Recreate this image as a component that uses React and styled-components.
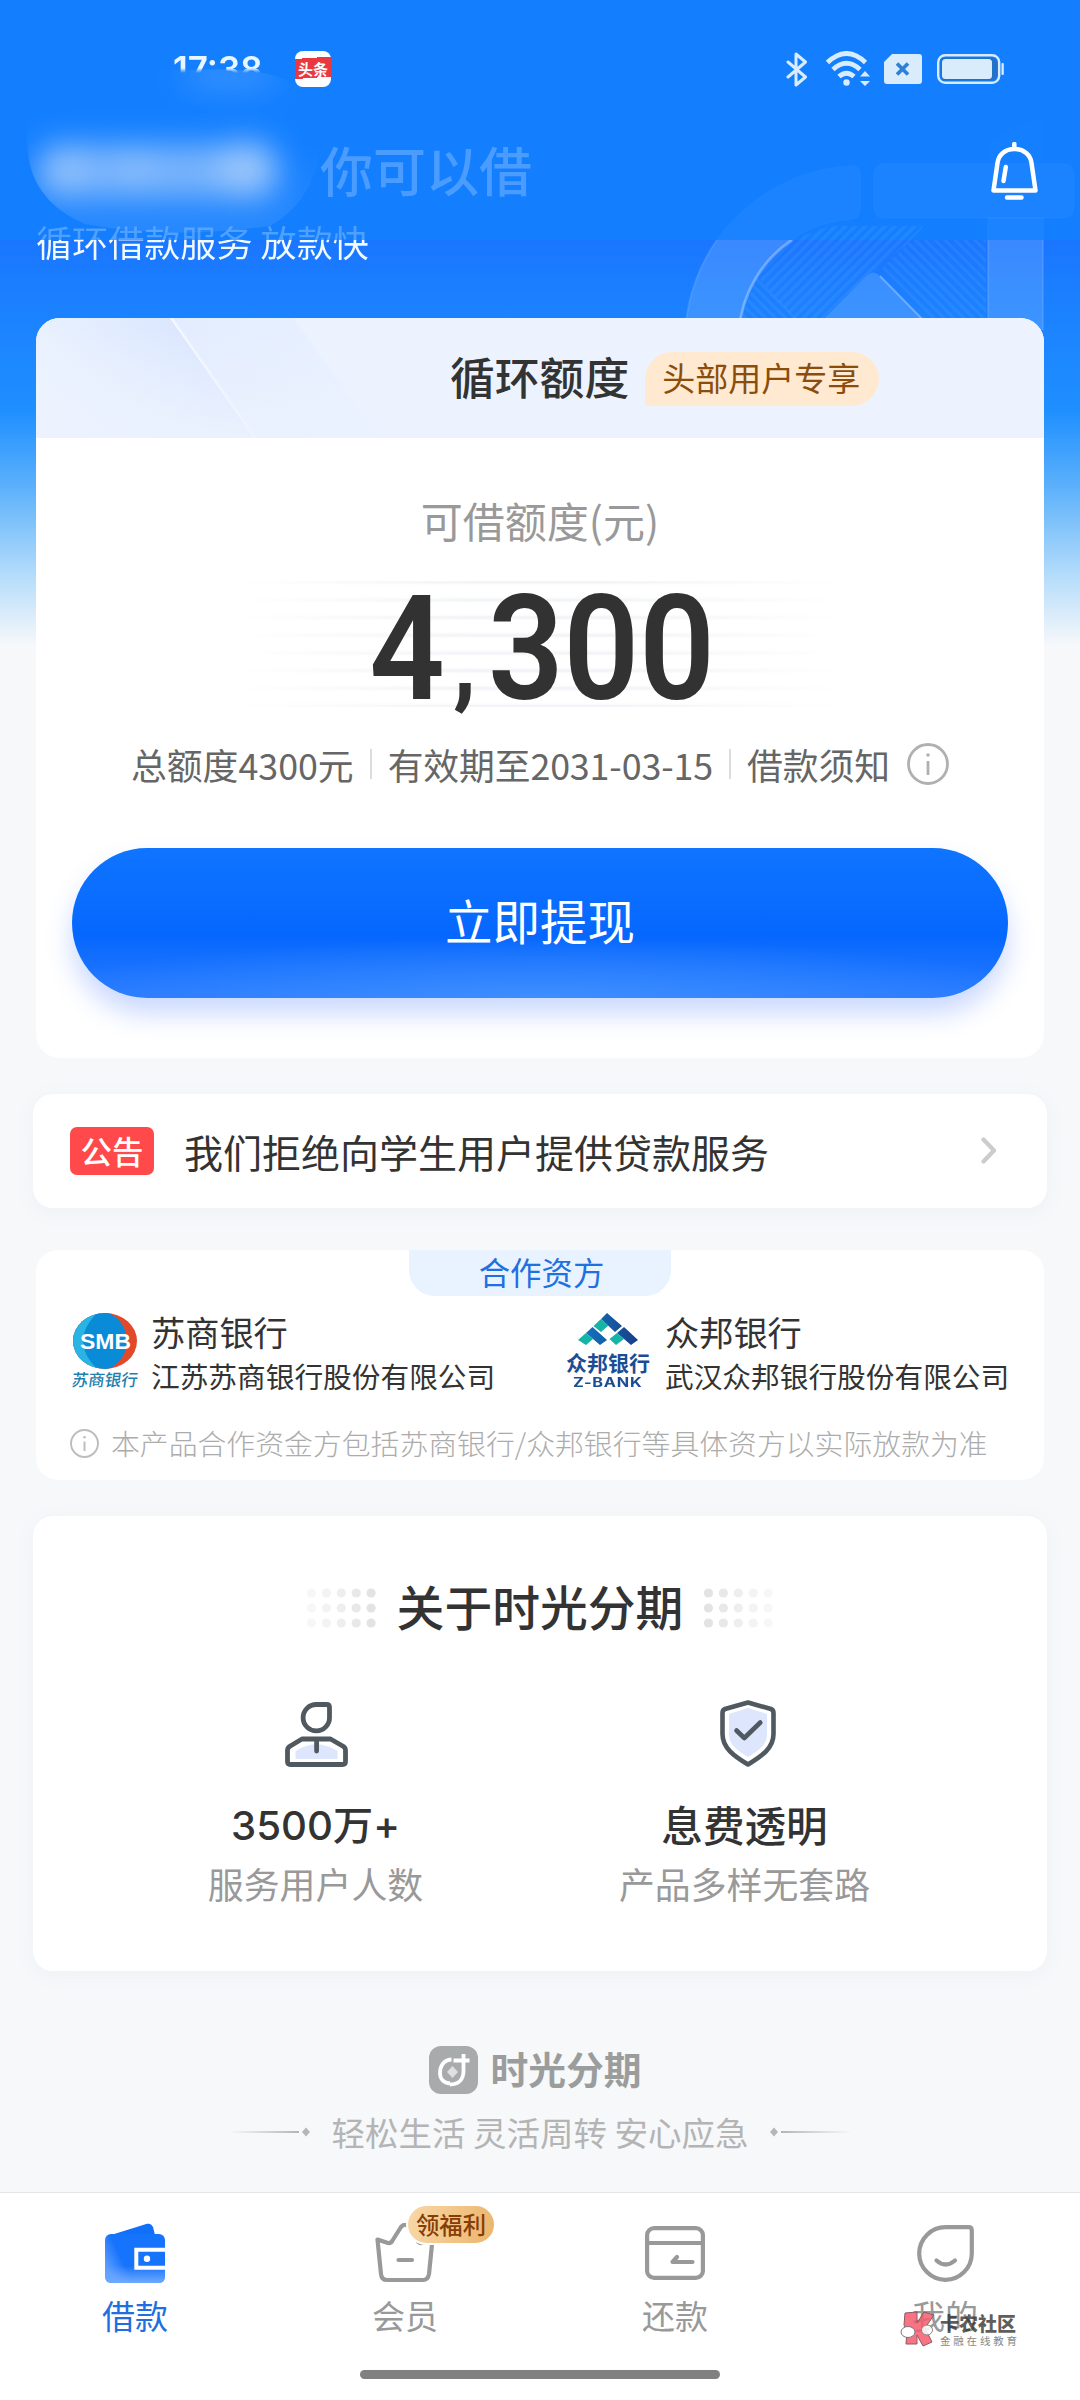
import React from "react";
import styled, { createGlobalStyle } from "styled-components";

const GlobalStyle = createGlobalStyle`
  *, *::before, *::after { box-sizing: border-box; }
  body {
    margin: 0;
    background: #f6f8fa;
    font-family: "Noto Sans CJK SC", "Noto Sans", sans-serif;
    color: #333;
  }
  svg { display: block; flex: none; }
`;

const Page = styled.div`
  position: relative;
  width: 1080px;
  height: 2400px;
  overflow: hidden;
  display: flex;
  flex-direction: column;
  background:
    linear-gradient(180deg, #137fff 0 240px, #1a76ff 240px, #1b80ff 300px, #1e8fff 410px, #5fb2fb 490px, #b4dcfa 575px, #f6f8fa 645px) no-repeat,
    #f6f8fa;
`;

const HeroArt = styled.svg`
  position: absolute;
  left: 0;
  top: 0;
`;

const StatusBar = styled.header`
  position: relative;
  height: 108px;
  padding: 48px 76px 0 173px;
  display: flex;
  align-items: flex-start;
  justify-content: space-between;
`;

const StatusGroup = styled.div`
  display: flex;
  align-items: center;
  gap: ${(p) => p.$gap}px;
  height: 42px;
`;

const Clock = styled.span`
  width: 92px;
  font: 600 35px/42px Inter, sans-serif;
  letter-spacing: 0;
  color: #eaf6ff;
  white-space: nowrap;
  mask-image: linear-gradient(180deg, #000 20px, transparent 25px);
`;

const NewsIcon = styled.span`
  width: 36px;
  height: 36px;
  border-radius: 8px;
  background: linear-gradient(176deg, #fff 8px, #e9383f 8px 28px, #fff 28px);
  color: #fff;
  font-size: 15px;
  font-weight: 700;
  line-height: 36px;
  text-align: center;
`;

const StatusIcons = styled.div`
  display: flex;
  align-items: center;
  height: 42px;
  color: #d9ecfc;
`;

const Greeting = styled.div`
  position: relative;
  height: 108px;
  padding: 0 42px 0 320px;
  display: flex;
  justify-content: space-between;
  align-items: flex-start;
`;

const GreetingText = styled.h1`
  margin: 21px 0 0;
  font-size: 53px;
  line-height: 80px;
  font-weight: 500;
  color: #4a9dff;
`;

const BellButton = styled.button`
  margin: 34px 0 0;
  padding: 0;
  border: 0;
  background: none;
  color: #fff;
`;

const Tagline = styled.p`
  position: relative;
  margin: -2px 0 50px 36px;
  width: 400px;
  font-size: 36.1px;
  line-height: 54px;
  color: transparent;
  background: linear-gradient(180deg, rgba(255, 255, 255, 0.26) 26px, #f2faff 26px);
  background-clip: text;
`;

const NameMask = styled.svg`
  position: absolute;
  left: 0;
  top: 50px;
`;

const Card = styled.section`
  position: relative;
  background: #fff;
  flex: none;
  margin: 0 ${(p) => p.$side}px ${(p) => p.$gap}px;
  height: ${(p) => p.$h}px;
  border-radius: ${(p) => p.$radius || 22}px;
  box-shadow: ${(p) => (p.$lift ? "0 4px 20px rgba(120,130,150,.06)" : "none")};
  display: flex;
  flex-direction: column;
  overflow: ${(p) => (p.$lift ? "visible" : "hidden")};
`;

const QuotaHead = styled.div`
  height: 120px;
  padding: 0 165px 4px 414px;
  display: flex;
  align-items: center;
  gap: 16px;
  background:
    linear-gradient(180deg, rgba(236, 243, 255, 0) 10%, rgba(236, 243, 255, 0.85)),
    linear-gradient(55deg, rgba(236, 243, 255, 0) 40px, rgba(218, 230, 254, 0.9) 178px, #f8faff 179px, rgba(224, 234, 254, 0.7) 182px, rgba(230, 239, 255, 0.9) 278px, rgba(236, 243, 255, 0) 282px),
    #ecf3ff;
`;

const QuotaTitle = styled.h2`
  margin: 0;
  font-size: 44.8px;
  line-height: 64px;
  font-weight: 500;
  white-space: nowrap;
`;

const VipTag = styled.span`
  height: 54px;
  margin-top: 5px;
  padding: 0 19px 0 17px;
  border-radius: 27px 27px 27px 4px;
  background: #ffe9d0;
  color: #8a4d0c;
  font-size: 33px;
  line-height: 51px;
  white-space: nowrap;
`;

const QuotaLabel = styled.p`
  margin: 52px 0 0;
  text-align: center;
  font-size: 42px;
  line-height: 60px;
  color: #999;
`;

const AmountArea = styled.div`
  margin: 31px auto 0;
  width: 600px;
  height: 126px;
  display: flex;
  justify-content: center;
  background:
    linear-gradient(90deg, #fff, rgba(255, 255, 255, 0) 40% 60%, #fff),
    repeating-linear-gradient(180deg, #f3f4f7 0 2px, #fff 4px 15px, #f8f9fb 17.7px);
`;

const Amount = styled.span`
  margin-left: 3px;
  font: 600 147px/136px Roboto, sans-serif;
  color: #323232;
  transform: scaleX(0.9);
  white-space: nowrap;
  display: flex;
`;

const AmountPart = styled.span``;

const AmountComma = styled.span`
  margin: 0 13px 0 9px;
  font-size: 100px;
  font-weight: 800;
  line-height: 160px;
  width: 26px;
`;

const Details = styled.div`
  margin-top: 30px;
  height: 54px;
  padding-left: 95px;
  display: flex;
  align-items: center;
  gap: 16.5px;
  color: #666;
  font-size: 35.8px;
  line-height: 54px;
  white-space: nowrap;
`;

const DateText = styled.span`
  letter-spacing: -0.12px;
`;

const Divider = styled.i`
  width: 2px;
  height: 30px;
  margin-right: -1px;
  background: #dcdcdc;
`;

const WithdrawButton = styled.button`
  margin: 57px 36px 0;
  height: 150px;
  flex: none;
  border: 0;
  border-radius: 75px;
  color: #fff;
  font: 400 47.5px/144px "Noto Sans CJK SC", sans-serif;
  padding: 0 0 6px;
  background:
    radial-gradient(ellipse 520px 60px at 50% 100%, rgba(70, 150, 255, 0.7), rgba(70, 150, 255, 0)),
    linear-gradient(180deg, #0f74ff 0, #086bff 45%, #0567fd 58%, #2a7bff 100%);
  box-shadow: 0 16px 26px rgba(70, 120, 255, 0.28);
`;

const NoticeRow = styled.div`
  height: 100%;
  padding: 0 50px 0 37px;
  display: flex;
  align-items: center;
`;

const NoticeTag = styled.span`
  width: 84px;
  height: 48px;
  border-radius: 7px;
  background: #ff494a;
  color: #fff;
  font-size: 31.5px;
  font-weight: 500;
  line-height: 47px;
  text-align: center;
`;

const NoticeText = styled.span`
  flex: 1;
  margin-left: 30px;
  font-size: 39px;
  line-height: 56px;
`;

const PartnerTab = styled.h3`
  margin: 0 auto;
  width: 262px;
  height: 46px;
  border-radius: 0 0 26px 26px;
  background: #e9f3ff;
  color: #1f70e0;
  font-size: 31.4px;
  font-weight: 400;
  line-height: 44px;
  padding-left: 3px;
  text-align: center;
`;

const Banks = styled.div`
  display: flex;
  height: 104px;
  padding: 11px 0 0 34px;
`;

const Bank = styled.div`
  display: flex;
  width: ${(p) => p.$w}px;
  flex: none;
`;

const BankLogo = styled.div`
  width: ${(p) => p.$w}px;
  margin-right: ${(p) => p.$gap}px;
  display: flex;
  flex-direction: column;
  align-items: center;
  padding-top: 6px;
`;

const ScriptName = styled.span`
  margin-top: 1px;
  font-size: 16.5px;
  line-height: 19px;
  font-weight: 500;
  color: #1f7fae;
  transform: skewX(-8deg);
  white-space: nowrap;
`;

const BankBold = styled.span`
  margin-top: 5px;
  font-size: 21px;
  line-height: 25px;
  font-weight: 700;
  color: #1b4d93;
  white-space: nowrap;
`;

const BankLatin = styled.span`
  font: 700 13px/14px Inter, sans-serif;
  color: #1b4d93;
  letter-spacing: 0.6px;
  transform: scaleX(1.25);
  white-space: nowrap;
`;

const BankText = styled.div`
  display: flex;
  flex-direction: column;
  white-space: nowrap;
`;

const BankName = styled.span`
  font-size: 34.2px;
  line-height: 48px;
`;

const BankFull = styled.span`
  font-size: 28.7px;
  line-height: 42px;
`;

const Note = styled.p`
  margin: 20px 0 0 34px;
  display: flex;
  align-items: center;
  gap: 12px;
  font-size: 28.85px;
  line-height: 46px;
  font-weight: 300;
  color: #acacac;
  white-space: nowrap;
`;

const AboutTitle = styled.div`
  margin-top: 57px;
  height: 70px;
  display: flex;
  justify-content: center;
  align-items: center;
  gap: 21px;
`;

const AboutHeading = styled.h2`
  margin: -4px 0 0;
  font-size: 47.8px;
  line-height: 70px;
  font-weight: 500;
`;

const Features = styled.div`
  display: flex;
  margin: 56px 88px 0 68px;
  justify-content: space-between;
`;

const Feature = styled.div`
  width: 430px;
  display: flex;
  flex-direction: column;
  align-items: center;
`;

const FeatureIcon = styled.div`
  height: 68px;
  padding-left: ${(p) => (p.$low ? 1 : 6)}px;
  display: flex;
  align-items: ${(p) => (p.$low ? "flex-end" : "center")};
`;

const FeatureTitle = styled.strong`
  margin-top: 27px;
  height: 60px;
  font-size: ${(p) => (p.$latin ? 40.2 : 41.6)}px;
  line-height: ${(p) => (p.$latin ? 63 : 60)}px;
  font-weight: 500;
  font-family: ${(p) => (p.$latin ? 'Inter, "Noto Sans CJK SC"' : '"Noto Sans CJK SC"')}, sans-serif;
`;

const FeatureSub = styled.span`
  margin-top: 2px;
  font-size: 35.9px;
  line-height: 54px;
  color: #999;
`;

const Footer = styled.footer`
  height: 147px;
  flex: none;
  display: flex;
  flex-direction: column;
  align-items: center;
`;

const Brand = styled.div`
  display: flex;
  align-items: center;
  gap: 12px;
  height: 50px;
  margin-right: 9px;
`;

const BrandName = styled.span`
  margin-top: -5px;
  font-size: 37.8px;
  font-weight: 700;
  line-height: 50px;
  color: #9b9d9d;
`;

const Slogan = styled.div`
  display: flex;
  align-items: center;
  gap: 21px;
  margin-top: 12px;
  height: 50px;
  font-size: 33.5px;
  line-height: 50px;
  color: #b4b4b4;
  white-space: nowrap;
`;

const TabBar = styled.nav`
  position: relative;
  flex: none;
  height: 208px;
  border-top: 1px solid #e3e5e9;
  background: #fff;
  display: flex;
`;

const Tab = styled.a`
  position: relative;
  width: 270px;
  display: flex;
  flex-direction: column;
  align-items: center;
  color: ${(p) => (p.$active ? "#1f6fe0" : "#999")};
`;

const TabIcon = styled.div`
  margin-top: 29px;
  height: 62px;
  display: flex;
  align-items: center;
`;

const TabLabel = styled.span`
  margin-top: 7px;
  font-size: 33px;
  line-height: 48px;
`;

const TabBadge = styled.span`
  position: absolute;
  left: 136px;
  top: 11px;
  width: 90px;
  height: 41px;
  border: 2px solid #fff;
  border-radius: 21px;
  background: linear-gradient(100deg, #f8d8a8, #ecb56c);
  color: #863d06;
  font-size: 23.3px;
  font-weight: 500;
  line-height: 36px;
  text-align: center;
`;

const HomeIndicator = styled.div`
  position: absolute;
  left: 360px;
  bottom: 21px;
  width: 360px;
  height: 9px;
  border-radius: 5px;
  background: #808080;
`;

const Watermark = styled.div`
  position: absolute;
  left: 899px;
  top: 118px;
  display: flex;
  gap: 5px;
`;

const WatermarkText = styled.div`
  display: flex;
  flex-direction: column;
  white-space: nowrap;
`;

const WatermarkName = styled.span`
  font-size: 19px;
  font-weight: 900;
  line-height: 23px;
  color: rgba(50, 50, 50, 0.78);
`;

const WatermarkSub = styled.span`
  font-size: 10.5px;
  line-height: 14px;
  letter-spacing: 2.8px;
  color: #888;
`;

const Glyph = ({ id }) => (
  <g id={id}>
    <path d="M685 345 A175 175 0 0 1 852 166 Q860 166 860 174 V210 Q860 218 852 219 A121 121 0 0 0 739 345 Z" />
    <rect x="874" y="164" width="200" height="54" rx="10" />
    <rect x="988" y="218" width="55" height="130" />
  </g>
);

function Art() {
  return (
    <HeroArt width="1080" height="330" viewBox="0 0 1080 330" fill="none">
      <defs>
        <clipPath id="upper"><rect width="1080" height="240" /></clipPath>
        <clipPath id="lower"><rect y="240" width="1080" height="90" /></clipPath>
        <pattern id="rise" width="7" height="7" patternUnits="userSpaceOnUse" patternTransform="rotate(45)">
          <rect width="3.5" height="7" fill="#fff" fillOpacity=".06" />
        </pattern>
        <pattern id="fall" width="7" height="7" patternUnits="userSpaceOnUse" patternTransform="rotate(-45)">
          <rect width="3" height="7" fill="#fff" fillOpacity=".055" />
        </pattern>
      </defs>
      <g clipPath="url(#upper)" fill="#fff" fillOpacity=".035" stroke="#fff" strokeOpacity=".02" strokeWidth="2">
        <Glyph id="markUpper" />
        <path d="M990 145 A70 70 0 0 1 1043 120 V164 H990 Z" fillOpacity=".012" stroke="none" />
      </g>
      <g clipPath="url(#lower)" fill="#fff" fillOpacity=".14" stroke="#fff" strokeOpacity=".1" strokeWidth="2">
        <Glyph id="markLower" />
        <path d="M792 240 A121 121 0 0 0 739 330" fill="none" strokeOpacity=".25" strokeWidth="3" />
        <path d="M813 330 L866 276 Q873 269 880 276 L933 330 Z" stroke="none" />
        <path d="M880 276 L933 330" fill="none" strokeOpacity=".3" />
      </g>
      <path d="M792 240 L830 226 H924 L905 246 L866 276 L823 318 H794 L757 276 Z" fill="url(#rise)" />
      <path d="M880 270 L912 240 H986 V318 H925 Z" fill="url(#fall)" />
      <path d="M757 276 L796 318 H742 Z" fill="url(#fall)" />
    </HeroArt>
  );
}

function MaskedName() {
  return (
    <NameMask width="340" height="190" viewBox="0 50 340 190">
      <defs>
        <filter id="soft" x="-30%" y="-80%" width="160%" height="260%"><feGaussianBlur stdDeviation="15" /></filter>
        <linearGradient id="haze" x1="0" y1="0" x2="0" y2="1">
          <stop offset=".5" stopColor="#7fb4fa" stopOpacity="0" />
          <stop offset="1" stopColor="#7fb4fa" stopOpacity=".2" />
        </linearGradient>
        <clipPath id="smudge">
          <path d="M27 70 H190 Q260 66 290 82 Q330 110 318 160 Q308 205 270 226 Q170 240 85 224 Q40 205 30 165 Q26 150 27 110 Z" />
        </clipPath>
      </defs>
      <g clipPath="url(#smudge)">
        <rect y="50" width="340" height="190" fill="url(#haze)" />
        <g filter="url(#soft)">
          <rect x="38" y="144" width="240" height="54" rx="20" fill="#a8cdfb" fillOpacity=".66" />
          <circle cx="66" cy="170" r="22" fill="#b4d3fb" fillOpacity=".4" />
          <circle cx="135" cy="168" r="18" fill="#b4d3fb" fillOpacity=".3" />
          <circle cx="245" cy="168" r="28" fill="#b4d3fb" fillOpacity=".55" />
          <ellipse cx="230" cy="77" rx="50" ry="10" fill="#8cc0ff" fillOpacity=".4" />
        </g>
      </g>
    </NameMask>
  );
}

const InfoIcon = ({ size, color, w }) => (
  <svg width={size} height={size} viewBox="0 0 42 42" fill="none" stroke={color} strokeWidth={w}>
    <circle cx="21" cy="21" r="19.5" />
    <path d="M21 18 V32" />
    <circle cx="21" cy="12" r={w * 0.65} fill={color} stroke="none" />
  </svg>
);

function Dots({ flip }) {
  const shades = ["#f7f7f7", "#f3f3f3", "#eeeeee", "#e8e8e8", "#e3e3e3"];
  const row = flip ? [...shades].reverse() : shades;
  return (
    <svg width="69" height="40" viewBox="0 0 69 40">
      {[5, 20, 35].map((y) =>
        row.map((c, i) => <circle key={`${y}-${i}`} cx={4.5 + i * 14.9} cy={y} r="4.6" fill={c} />)
      )}
    </svg>
  );
}

const SloganLine = ({ flip, id }) => (
  <svg width="82" height="12" viewBox="0 0 82 12" style={{ transform: flip ? "scaleX(-1)" : "none" }}>
    <defs>
      <linearGradient id={id}><stop stopColor="#bbb" stopOpacity="0" /><stop offset="1" stopColor="#b4b4b4" /></linearGradient>
    </defs>
    <rect x="0" y="5" width="71" height="2" fill={`url(#${id})`} />
    <path d="M78 1.500 L82 6 L78 10.500 L74 6 Z" fill="#b6b6b6" />
  </svg>
);

export default function App() {
  return (
    <Page>
      <GlobalStyle />
      <Art />
      <StatusBar>
        <StatusGroup $gap={30}>
          <Clock>17:38</Clock>
          <NewsIcon>头条</NewsIcon>
        </StatusGroup>
        <StatusIcons>
          <svg width="22" height="35" viewBox="0 0 22 35" fill="none" stroke="currentColor" strokeWidth="3" strokeLinejoin="round" strokeLinecap="round">
            <path d="M2 10 L19.500 25 L10 33 V2 L19.500 10 L2 25" />
          </svg>
          <svg width="46" height="36" viewBox="0 0 46 36" fill="none" stroke="currentColor" strokeWidth="4.8" style={{ marginLeft: 18 }}>
            <path d="M1.500 11.500 Q20.500 -6.500 39.500 11.500" />
            <path d="M7 18.500 Q20.500 6 34 18.500" />
            <path d="M13 25.500 Q20.500 19 28 25.500" />
            <circle cx="20.500" cy="31.500" r="3.200" fill="currentColor" stroke="none" />
            <path d="M34 25.500 L39 20 L44 25.500 Z M34 30 L39 35 L44 30 Z" fill="currentColor" stroke="none" />
          </svg>
          <svg width="38" height="30" viewBox="0 0 38 30" style={{ marginLeft: 12 }}>
            <path d="M8 0 H35 Q38 0 38 3 V27 Q38 30 35 30 H3 Q0 30 0 27 V8 Z" fill="currentColor" />
            <path d="M13 9.500 L24 20.500 M24 9.500 L13 20.500" stroke="#2d7fd8" strokeWidth="3.600" />
          </svg>
          <svg width="67" height="30" viewBox="0 0 67 30" style={{ marginLeft: 15 }}>
            <rect x="1.200" y="1.200" width="61" height="27.600" rx="7" fill="none" stroke="currentColor" strokeWidth="2.400" />
            <rect x="3.500" y="3.500" width="56.500" height="23" rx="5" fill="#2372c9" />
            <rect x="5" y="5" width="50" height="20" rx="3.500" fill="currentColor" />
            <rect x="64.500" y="9" width="2.300" height="12" rx="1" fill="currentColor" />
          </svg>
        </StatusIcons>
      </StatusBar>
      <Greeting>
        <GreetingText>你可以借</GreetingText>
        <BellButton aria-label="消息">
          <svg width="47" height="58" viewBox="0 0 47 58" fill="none" stroke="currentColor" strokeWidth="4.500" strokeLinejoin="round" strokeLinecap="round">
            <path d="M23.300 2 V6 M23.300 7 C14 7 7.500 13 6.500 21 L2.500 48.500 H44.500 L40.500 21 C39.500 13 33 7 23.300 7 Z M16 55.500 H30.500 M14.800 25 L12.500 39" />
          </svg>
        </BellButton>
      </Greeting>
      <Tagline>循环借款服务 放款快</Tagline>
      <MaskedName />

      <Card $side={36} $gap={36} $h={739.5} $radius={24}>
        <QuotaHead>
          <QuotaTitle>循环额度</QuotaTitle>
          <VipTag>头部用户专享</VipTag>
        </QuotaHead>
        <QuotaLabel>可借额度(元)</QuotaLabel>
        <AmountArea>
          <Amount>
            <AmountPart>4</AmountPart>
            <AmountComma>,</AmountComma>
            <AmountPart>300</AmountPart>
          </Amount>
        </AmountArea>
        <Details>
          <span>总额度4300元</span>
          <Divider />
          <DateText>有效期至2031-03-15</DateText>
          <Divider />
          <span>借款须知</span>
          <InfoIcon size={42} color="#b0b0b0" w={2.8} />
        </Details>
        <WithdrawButton>立即提现</WithdrawButton>
      </Card>

      <Card $side={33} $gap={42.5} $h={114} $radius={20} $lift>
        <NoticeRow>
          <NoticeTag>公告</NoticeTag>
          <NoticeText>我们拒绝向学生用户提供贷款服务</NoticeText>
          <svg width="16" height="27" viewBox="0 0 16 27" fill="none" stroke="#ccc" strokeWidth="4.200" strokeLinecap="round" strokeLinejoin="round">
            <path d="M2.500 2.500 L13 13.500 L2.500 24.500" />
          </svg>
        </NoticeRow>
      </Card>

      <Card $side={36} $gap={36} $h={230}>
        <PartnerTab>合作资方</PartnerTab>
        <Banks>
          <Bank $w={494}>
            <BankLogo $w={70} $gap={11}>
              <svg width="64" height="56" viewBox="0 0 64 56">
                <defs><clipPath id="smb"><ellipse cx="32" cy="28" rx="32" ry="28" /></clipPath></defs>
                <g clipPath="url(#smb)">
                  <rect width="64" height="56" fill="#e2492b" />
                  <ellipse cx="22" cy="28" rx="32" ry="31" fill="#0a8bd8" />
                  <path d="M0 0 H24 Q-4 28 24 56 H0 Z" fill="#29b4e4" />
                </g>
                <text x="32.500" y="35.500" textAnchor="middle" fontFamily="Liberation Sans" fontWeight="700" fontSize="22" textLength="51" lengthAdjust="spacingAndGlyphs" fill="#fff">SMB</text>
              </svg>
              <ScriptName>苏商银行</ScriptName>
            </BankLogo>
            <BankText>
              <BankName>苏商银行</BankName>
              <BankFull>江苏苏商银行股份有限公司</BankFull>
            </BankText>
          </Bank>
          <Bank $w={460}>
            <BankLogo $w={88} $gap={13}>
              <svg width="60" height="32" viewBox="0 0 60 32">
                <defs>
                  <linearGradient id="zb"><stop stopColor="#1272bd" /><stop offset="1" stopColor="#173e86" /></linearGradient>
                </defs>
                <path d="M29 0 L44 13 L37 19 L23 6 Z M14.500 14 L29 27 L22 32 L8 20 Z M46 14 L60 27 L53 32 L39 20 Z" fill="url(#zb)" />
                <path d="M23 6 L30.500 12.500 L23 19 L15.500 13 Z M8 20 L15 26 L8 32 L0 27 Z M39 20 L46 26 L38 32 L31.500 26 Z" fill="#16b3a6" />
              </svg>
              <BankBold>众邦银行</BankBold>
              <BankLatin>Z-BANK</BankLatin>
            </BankLogo>
            <BankText>
              <BankName>众邦银行</BankName>
              <BankFull>武汉众邦银行股份有限公司</BankFull>
            </BankText>
          </Bank>
        </Banks>
        <Note>
          <InfoIcon size={29} color="#bdbdbd" w={2.8} />
          本产品合作资金方包括苏商银行/众邦银行等具体资方以实际放款为准
        </Note>
      </Card>

      <Card $side={33} $gap={74} $h={455} $radius={20} $lift>
        <AboutTitle>
          <Dots />
          <AboutHeading>关于时光分期</AboutHeading>
          <Dots flip />
        </AboutTitle>
        <Features>
          <Feature>
            <FeatureIcon $low>
              <svg width="63" height="65" viewBox="0 0 63 65" fill="none" stroke="#50595f" strokeWidth="4.800" strokeLinejoin="round" strokeLinecap="round">
                <path d="M10.500 57 V49 Q20 43 31.500 42 Q43 43 52.500 49 V57 Z" fill="#dde6fc" stroke="none" />
                <path d="M31.300 2.500 H41.500 Q44.500 2.500 44.500 5.500 V15.500 A13.200 13.200 0 1 1 31.300 2.500 Z" />
                <path d="M17 37 H45.500 L58.500 44.500 Q60.500 46 60.500 48 V59.500 Q60.500 62.500 57.500 62.500 H5.500 Q2.500 62.500 2.500 59.500 V48 Q2.500 46 4.500 44.500 Z M31.600 38 V49" />
              </svg>
            </FeatureIcon>
            <FeatureTitle $latin>3500万+</FeatureTitle>
            <FeatureSub>服务用户人数</FeatureSub>
          </Feature>
          <Feature>
            <FeatureIcon>
              <svg width="56" height="67" viewBox="0 0 56 67" fill="none" stroke="#50595f" strokeWidth="4.600" strokeLinejoin="round" strokeLinecap="round">
                <path d="M28 8 L47 14 V34 C47 45 38 51 28 57 C18 51 9 45 9 34 V14 Z" fill="#dde6fc" stroke="none" />
                <path d="M28 2.500 L51 9 Q53.500 10 53.500 13 V34 C53.500 48 42 56 28 64.500 C14 56 2.500 48 2.500 34 V13 Q2.500 10 5 9 Z" />
                <path d="M16.500 30.500 L24.300 38 L40.300 22.500" />
              </svg>
            </FeatureIcon>
            <FeatureTitle>息费透明</FeatureTitle>
            <FeatureSub>产品多样无套路</FeatureSub>
          </Feature>
        </Features>
      </Card>

      <Footer>
        <Brand>
          <svg width="49" height="48" viewBox="0 0 49 48" fill="none">
            <rect width="49" height="48" rx="12" fill="#a8abab" />
            <path d="M22.500 13.500 C14 14 11 21 11 27 C11 33 15 37 21 37.500" stroke="#fff" strokeWidth="3.800" />
            <path d="M24.500 14.500 H40.500 M34.500 8 V25 C34.500 33 30 38.500 21 38.500" stroke="#fff" strokeWidth="3.800" />
            <path d="M23.500 20 L29 26 L23.500 32 L18 26 Z" fill="#dfe0e0" />
          </svg>
          <BrandName>时光分期</BrandName>
        </Brand>
        <Slogan>
          <SloganLine id="lineLeft" />
          轻松生活 灵活周转 安心应急
          <SloganLine id="lineRight" flip />
        </Slogan>
      </Footer>

      <TabBar>
        <Tab $active>
          <TabIcon>
            <svg width="60" height="60" viewBox="0 0 60 60" fill="none">
              <defs>
                <linearGradient id="wallet" x1="0" y1=".6" x2=".5" y2=".4">
                  <stop stopColor="#5b9cff" /><stop offset=".55" stopColor="#1673fb" />
                </linearGradient>
                <linearGradient id="walletBase" x1="0" y1="0" x2="0" y2="1">
                  <stop offset=".65" stopColor="#6fa9ff" stopOpacity="0" /><stop offset="1" stopColor="#6fa9ff" />
                </linearGradient>
              </defs>
              <path d="M6 12 L42 .8 Q46 0 48 4 L50 12 Z" fill="#1170fa" />
              <rect y="11" width="60" height="49" rx="6" fill="url(#wallet)" />
              <rect y="11" width="60" height="49" rx="6" fill="url(#walletBase)" />
              <path d="M60 26.800 H31.300 V44.800 H60" stroke="#fff" strokeWidth="4" />
              <circle cx="42" cy="35.800" r="3.200" fill="#fff" />
            </svg>
          </TabIcon>
          <TabLabel>借款</TabLabel>
        </Tab>
        <Tab>
          <TabIcon>
            <svg width="60" height="60" viewBox="0 0 60 60" fill="none" stroke="#999" strokeWidth="4.200" strokeLinejoin="round" strokeLinecap="round">
              <path d="M2.500 16.500 L13 20 Q16 20.500 17.500 17.500 L26 4 Q30 -.5 34 4 L42.500 17.500 Q44 20.500 47 20 L57.500 16.500 L54 51 Q53 57 48 57 H12 Q6.500 57 6 51 Z M23.500 37 H37" />
            </svg>
          </TabIcon>
          <TabLabel>会员</TabLabel>
          <TabBadge>领福利</TabBadge>
        </Tab>
        <Tab>
          <TabIcon>
            <svg width="60" height="54" viewBox="0 0 60 54" fill="none" stroke="#999" strokeWidth="4.200" strokeLinejoin="round" strokeLinecap="round">
              <rect x="2.100" y="2.100" width="55.800" height="49.800" rx="7" />
              <path d="M3 17 H57 M47.500 36 H27.500 L32 31" />
            </svg>
          </TabIcon>
          <TabLabel>还款</TabLabel>
        </Tab>
        <Tab>
          <TabIcon>
            <svg width="57" height="57" viewBox="0 0 57 57" fill="none" stroke="#999" strokeWidth="4.200" strokeLinejoin="round" strokeLinecap="round">
              <path d="M28.500 2.200 H51.500 Q54.800 2.200 54.800 5.500 V28.500 A26.300 26.300 0 1 1 28.500 2.200 Z M19.500 35.500 Q28.500 43.500 38 35.500" />
            </svg>
          </TabIcon>
          <TabLabel>我的</TabLabel>
        </Tab>
        <Watermark>
          <svg width="36" height="36" viewBox="0 0 36 36" strokeWidth="1">
            <path d="M6 2 L18 1 L18 12 L25 1 L35 4 L26 17 L33 31 L24 35 L18 24 L18 33 L7 33 L8 20 L5 14 Z" fill="rgba(247,92,112,.85)" stroke="#8c5a60" />
            <ellipse cx="9" cy="21" rx="7" ry="5.500" fill="#fff" stroke="#777" />
            <ellipse cx="28" cy="19" rx="5.500" ry="5" fill="rgba(255,255,255,.85)" stroke="#888" />
          </svg>
          <WatermarkText>
            <WatermarkName>卡农社区</WatermarkName>
            <WatermarkSub>金融在线教育</WatermarkSub>
          </WatermarkText>
        </Watermark>
        <HomeIndicator />
      </TabBar>
    </Page>
  );
}
